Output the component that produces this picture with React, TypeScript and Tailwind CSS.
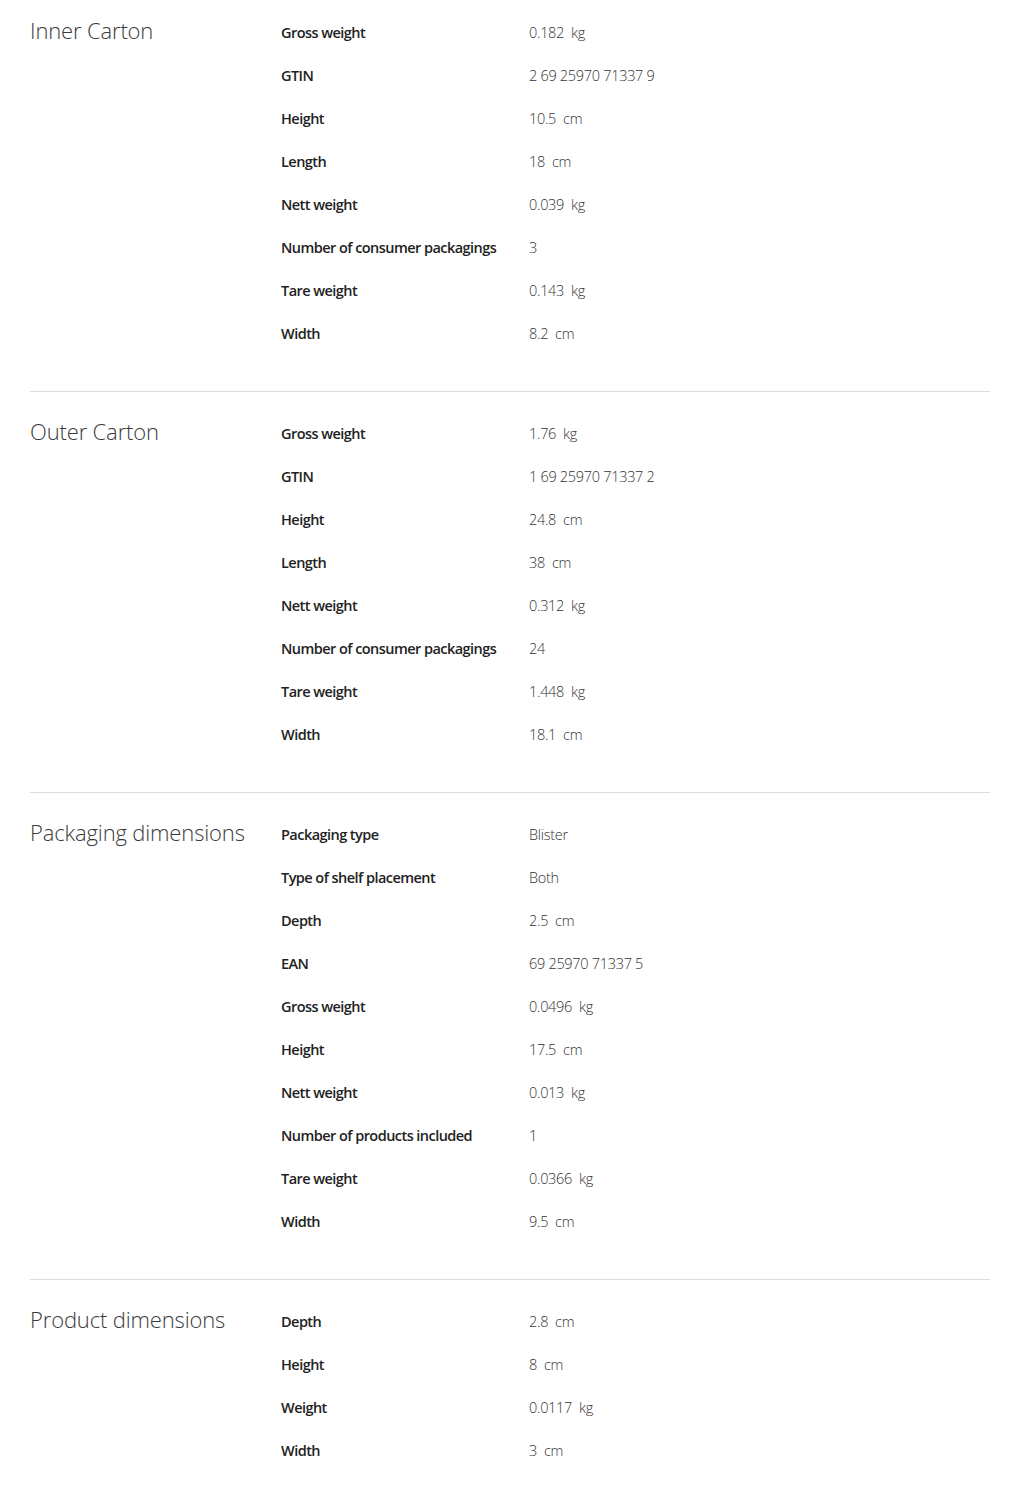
import React from 'react';

type Row = { label: string; value: string; unit?: string };

const sections: { title: string; rows: Row[] }[] = [
    {
        title: 'Inner Carton',
        rows: [
            { label: 'Gross weight', value: '0.182', unit: 'kg' },
            { label: 'GTIN', value: '2 69 25970 71337 9' },
            { label: 'Height', value: '10.5', unit: 'cm' },
            { label: 'Length', value: '18', unit: 'cm' },
            { label: 'Nett weight', value: '0.039', unit: 'kg' },
            { label: 'Number of consumer packagings', value: '3' },
            { label: 'Tare weight', value: '0.143', unit: 'kg' },
            { label: 'Width', value: '8.2', unit: 'cm' },
        ],
    },
    {
        title: 'Outer Carton',
        rows: [
            { label: 'Gross weight', value: '1.76', unit: 'kg' },
            { label: 'GTIN', value: '1 69 25970 71337 2' },
            { label: 'Height', value: '24.8', unit: 'cm' },
            { label: 'Length', value: '38', unit: 'cm' },
            { label: 'Nett weight', value: '0.312', unit: 'kg' },
            { label: 'Number of consumer packagings', value: '24' },
            { label: 'Tare weight', value: '1.448', unit: 'kg' },
            { label: 'Width', value: '18.1', unit: 'cm' },
        ],
    },
    {
        title: 'Packaging dimensions',
        rows: [
            { label: 'Packaging type', value: 'Blister' },
            { label: 'Type of shelf placement', value: 'Both' },
            { label: 'Depth', value: '2.5', unit: 'cm' },
            { label: 'EAN', value: '69 25970 71337 5' },
            { label: 'Gross weight', value: '0.0496', unit: 'kg' },
            { label: 'Height', value: '17.5', unit: 'cm' },
            { label: 'Nett weight', value: '0.013', unit: 'kg' },
            { label: 'Number of products included', value: '1' },
            { label: 'Tare weight', value: '0.0366', unit: 'kg' },
            { label: 'Width', value: '9.5', unit: 'cm' },
        ],
    },
    {
        title: 'Product dimensions',
        rows: [
            { label: 'Depth', value: '2.8', unit: 'cm' },
            { label: 'Height', value: '8', unit: 'cm' },
            { label: 'Weight', value: '0.0117', unit: 'kg' },
            { label: 'Width', value: '3', unit: 'cm' },
        ],
    },
];

export default function App() {
    return (
        <div className="w-[1016px] min-h-[1492px] bg-white pl-[30px] pr-[26px] font-['Open_Sans',sans-serif]">
            {sections.map((section, i) => (
                <div
                    key={section.title}
                    className={`flex pb-[36px] ${i === 0 ? 'pt-[11px]' : 'pt-[20px] border-t border-[#dcdcdc]'} ${i === sections.length - 1 ? 'pb-[20px]' : ''}`}
                >
                    {/* Section title */}
                    <h3 className="w-[251px] shrink-0 h-[43px] pb-[4px] flex items-center text-[22px] font-light text-[#3a3a3a] tracking-[-0.15px]">
                        {section.title}
                    </h3>

                    <div className="flex flex-col">
                        {section.rows.map((row) => (
                            <div key={row.label} className="flex h-[43px] items-center text-[14.5px]">
                                <div className="w-[248px] shrink-0 font-semibold text-[#222] tracking-[-0.55px]">
                                    {row.label}
                                </div>
                                <div className="font-light text-[#333] tracking-[-0.3px]">
                                    {row.value}
                                    {row.unit && <span className="ml-[7px]">{row.unit}</span>}
                                </div>
                            </div>
                        ))}
                    </div>
                </div>
            ))}
        </div>
    );
}
